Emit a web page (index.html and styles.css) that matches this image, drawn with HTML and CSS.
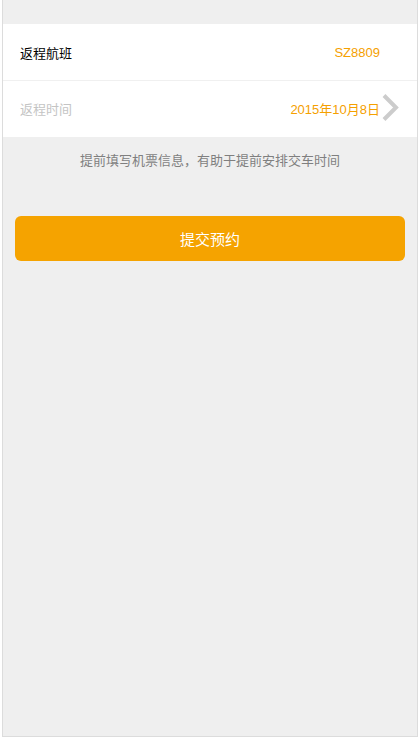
FILE: index.html
```html
<!DOCTYPE html>
<html>
<head>
<meta charset="utf-8">
<link rel="stylesheet" href="styles.css">
</head>
<body>
<div class="frame">
  <div class="panel">
    <div class="row">
      <span class="label">返程航班</span>
      <span class="value">SZ8809</span>
    </div>
    <div class="row row-time">
      <span class="label muted">返程时间</span>
      <span class="value date">2015年10月8日</span>
      <svg class="chev" width="20" height="30" viewBox="0 0 20 30"><path d="M3 2.5 L15 14.5 L3 26.5" fill="none" stroke="#cccccc" stroke-width="4"/></svg>
    </div>
  </div>
  <p class="hint">提前填写机票信息，有助于提前安排交车时间</p>
  <div class="actions">
    <button class="submit">提交预约</button>
  </div>
</div>
</body>
</html>
```

FILE: styles.css
```css
html, body {
  margin: 0;
  padding: 0;
  background: #ffffff;
}
body {
  font-family: "Liberation Sans", Arial, "Noto Sans CJK SC", sans-serif;
  font-size: 13px;
}
.frame {
  box-sizing: border-box;
  margin-left: 2px;
  width: 416px;
  height: 737px;
  background: #efefef;
  border: 1px solid #dcdcdc;
  border-top: none;
  padding-top: 24px;
}
.panel {
  background: #ffffff;
}
.row {
  display: flex;
  align-items: center;
  height: 56px;
  padding: 0 37px 0 17px;
  border-bottom: 1px solid #f0f0f0;
}
.row-time {
  height: 56px;
  border-bottom: none;
  padding-right: 16px;
  padding-bottom: 2px;
  box-sizing: border-box;
}
.label {
  flex: 1;
  color: #000000;
  font-family: "Noto Sans CJK SC", sans-serif;
  font-size: 13px;
}
.label.muted {
  color: #c4c4c4;
}
.value {
  color: #f5a000;
  font-size: 13px;
}
.date {
  font-family: "Liberation Sans", "Noto Sans CJK SC", sans-serif;
}
.chev {
  margin-left: 1px;
  display: block;
}
.hint {
  margin: 14px 0 0;
  text-align: center;
  color: #7f7f7f;
  font-family: "Noto Sans CJK SC", sans-serif;
  font-size: 13px;
  line-height: 18px;
}
.actions {
  padding: 0 12px;
  margin-top: 47px;
}
.submit {
  display: block;
  width: 100%;
  height: 45px;
  border: none;
  border-radius: 6px;
  background: #f5a300;
  color: #ffffff;
  font-family: "Noto Sans CJK SC", sans-serif;
  font-size: 15px;
}
```
